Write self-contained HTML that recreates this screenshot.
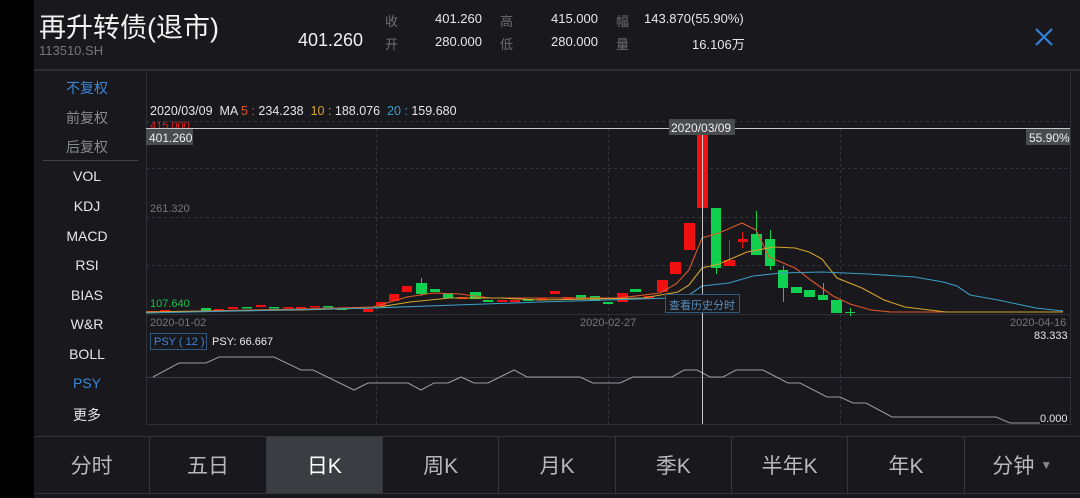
<!DOCTYPE html>
<html><head><meta charset="utf-8"><style>
*{margin:0;padding:0;box-sizing:border-box}
body{width:1080px;height:498px;background:#000;overflow:hidden;font-family:"Liberation Sans","Noto Sans CJK SC",sans-serif;position:relative}
#app{position:absolute;left:34px;top:0;width:1046px;height:498px;background:#18181d}
.a{position:absolute;white-space:nowrap}
.side{position:absolute;left:34px;width:106px;text-align:center;font-size:14px;color:#e8e8e8}
.tabs{position:absolute;left:34px;top:436px;width:1046px;height:58px;border-top:1px solid #333;border-bottom:1px solid #333;display:flex}
.tabs div{flex:1;border-right:1px solid #34363b;color:#b8b9bc;font-size:21px;display:flex;align-items:center;justify-content:center}
.tabs .on{background:#3a3d42;color:#fff}
</style></head><body>
<div id="app"></div>
<div class="a" style="left:39px;top:6px;font-size:27px;color:#f2f2f2">再升转债(退市)</div>
<div class="a" style="left:39px;top:43px;font-size:13px;color:#76777b">113510.SH</div>
<div class="a" style="left:298px;top:30px;font-size:18px;color:#f0f0f0">401.260</div>
<div class="a" style="left:385px;top:11px;font-size:13px;color:#6e6f73">收</div>
<div class="a" style="left:385px;top:34px;font-size:13px;color:#6e6f73">开</div>
<div class="a" style="left:435px;top:11px;font-size:13px;color:#e8e8e8">401.260</div>
<div class="a" style="left:435px;top:34px;font-size:13px;color:#e8e8e8">280.000</div>
<div class="a" style="left:500px;top:11px;font-size:13px;color:#6e6f73">高</div>
<div class="a" style="left:500px;top:34px;font-size:13px;color:#6e6f73">低</div>
<div class="a" style="left:551px;top:11px;font-size:13px;color:#e8e8e8">415.000</div>
<div class="a" style="left:551px;top:34px;font-size:13px;color:#e8e8e8">280.000</div>
<div class="a" style="left:616px;top:11px;font-size:13px;color:#6e6f73">幅</div>
<div class="a" style="left:616px;top:34px;font-size:13px;color:#6e6f73">量</div>
<div class="a" style="left:644px;top:11px;font-size:13px;color:#e8e8e8">143.870(55.90%)</div>
<div class="a" style="left:692px;top:34px;font-size:13px;color:#e8e8e8">16.106万</div>
<svg class="a" style="left:1034px;top:27px" width="20" height="20"><path d="M2 2L18 18M18 2L2 18" stroke="#2f86de" stroke-width="2"/></svg>
<div class="a" style="left:34px;top:69px;width:1046px;height:2px;background:#2c2d31"></div>

<div class="side" style="top:78px;color:#3d86d8">不复权</div>
<div class="side" style="top:108px;color:#8a8b8f">前复权</div>
<div class="side" style="top:137px;color:#8a8b8f">后复权</div>
<div class="a" style="left:43px;top:160px;width:95px;height:1px;background:#444"></div>
<div class="side" style="top:168px">VOL</div>
<div class="side" style="top:198px">KDJ</div>
<div class="side" style="top:228px">MACD</div>
<div class="side" style="top:257px">RSI</div>
<div class="side" style="top:287px">BIAS</div>
<div class="side" style="top:316px">W&amp;R</div>
<div class="side" style="top:346px">BOLL</div>
<div class="side" style="top:375px;color:#3d86d8">PSY</div>
<div class="side" style="top:405px">更多</div>

<div class="a" style="left:150px;top:120px;font-size:11px;color:#e02020">415.000</div>
<svg class="a" style="left:0;top:0" width="1080" height="498">
<g fill="none" stroke="#2e3035" stroke-width="1">
<path d="M146.5 72V425M1070.5 72V425M146 314.5H1070M146 424.5H1070"/>
</g>
<g fill="none" stroke="#34363b" stroke-dasharray="3,3">
<path d="M146 121.5H1070M146 168.5H1070M146 217.5H1070M146 265.5H1070M376.5 128V425M608.5 128V425M840.5 128V425"/>
</g>
<path d="M146 377.5H1070" stroke="#3b3d42"/>
<g fill="#f01010">
<rect x="147" y="311" width="10" height="2"/><rect x="160" y="310" width="10" height="2"/><rect x="214" y="309" width="10" height="2"/><rect x="228" y="307" width="10" height="2"/><rect x="256" y="305" width="10" height="2"/><rect x="283" y="307" width="10" height="1.5"/><rect x="296" y="307" width="10" height="1.5"/><rect x="310" y="306" width="10" height="1.5"/><rect x="363" y="309" width="10" height="3"/><rect x="376" y="302" width="10" height="4"/><rect x="389" y="294" width="10" height="7"/><rect x="402" y="286" width="10" height="6"/><rect x="457" y="297" width="10" height="2"/><rect x="497" y="300" width="10" height="2"/><rect x="510" y="300" width="10" height="2"/><rect x="537" y="298" width="10" height="2"/><rect x="550" y="291" width="10" height="3"/>
<rect x="563" y="297" width="10" height="3"/><rect x="617" y="293" width="11" height="9"/><rect x="644" y="296" width="10" height="3"/><rect x="657" y="280" width="11" height="12"/><rect x="670" y="262" width="11" height="12"/><rect x="684" y="223" width="11" height="27"/><rect x="697" y="132" width="11" height="76"/><rect x="724" y="260" width="11" height="6"/><rect x="738" y="239" width="10" height="3"/>
<rect x="729" y="240" width="1" height="20"/><rect x="742" y="232" width="1" height="16"/>
</g>
<g fill="#10d050">
<rect x="201" y="308" width="10" height="3"/><rect x="242" y="307" width="10" height="1.5"/><rect x="269" y="307" width="10" height="1.5"/><rect x="323" y="306" width="10" height="1.5"/><rect x="337" y="308" width="10" height="2"/><rect x="416" y="283" width="11" height="11"/><rect x="430" y="289" width="10" height="3"/><rect x="443" y="293" width="10" height="5"/><rect x="470" y="292" width="11" height="7"/><rect x="483" y="300" width="10" height="2"/><rect x="523" y="299" width="10" height="2"/>
<rect x="576" y="295" width="10" height="4"/><rect x="590" y="296" width="10" height="5"/><rect x="603" y="302" width="10" height="2"/><rect x="630" y="289" width="11" height="3"/><rect x="711" y="208" width="10" height="60"/><rect x="751" y="234" width="11" height="21"/><rect x="765" y="239" width="10" height="27"/><rect x="778" y="270" width="10" height="18"/><rect x="791" y="287" width="11" height="6"/><rect x="804" y="290" width="11" height="7"/><rect x="818" y="295" width="10" height="5"/><rect x="831" y="300" width="11" height="13"/><rect x="845" y="312" width="10" height="1"/>
<rect x="756" y="211" width="1" height="44"/><rect x="770" y="230" width="1" height="40"/><rect x="783" y="266" width="1" height="36"/><rect x="716" y="266" width="1" height="8"/><rect x="823" y="283" width="1" height="12"/><rect x="850" y="308" width="1" height="8"/><rect x="421" y="278" width="1" height="18"/>
</g>
<g fill="none" stroke-width="1.1">
<polyline stroke="#e0582a" points="146,312 300,309 373,307 407,297 433,293 460,294 490,298 540,298 619,298 660,293 676,284 689,270 702,238 719,233 742,223 756,230 769,257 795,268 812,281 833,296 850,304 871,310 891,312 1063,312"/>
<polyline stroke="#d4a52c" points="146,312 300,310 373,308 410,302 450,298 500,298 540,300 643,298 678,292 689,285 702,268 719,264 747,252 774,247 795,248 809,252 822,259 837,278 862,288 884,300 905,307 946,312 1063,312"/>
<polyline stroke="#3a9ec6" points="146,313 373,308 540,302 671,298 689,295 702,286 729,283 753,276 781,273 822,272 867,274 915,277 943,282 957,286 970,295 998,300 1036,308 1063,311"/>
<polyline stroke="#9a9b9e" points="153,377 179,363 206,363 219,357 274,357 301,370 313,370 354,390 368,383 408,383 421,390 434,383 448,383 461,377 474,383 488,383 514,370 527,377 580,377 593,383 620,383 633,377 672,377 684,370 697,370 710,377 723,377 736,370 763,370 788,383 800,383 827,397 840,397 853,403 866,403 892,417 996,417 1010,423 1040,423"/>
</g>
<path d="M702.5 128V424M146 128.5H1070" stroke="#c8c8c8"/>
<rect x="669" y="119" width="66" height="16" fill="#4a4b4f"/>
<rect x="146" y="129" width="47" height="16" fill="#4a4b4f"/>
<rect x="1026" y="129" width="44" height="16" fill="#4a4b4f"/>
<rect x="665.5" y="294.5" width="74" height="18" fill="#18181d" stroke="#2d5a80"/>
<rect x="150.5" y="333.5" width="56" height="16" fill="none" stroke="#2d5a80"/>
</svg>
<div class="a" style="left:150px;top:104px;font-size:12.5px;color:#e6e6e6">2020/03/09 &nbsp;MA <span style="color:#e0582a">5 : </span>234.238 <span style="color:#d4a52c">&nbsp;10 : </span>188.076 <span style="color:#3a9ec6">&nbsp;20 : </span>159.680</div>
<div class="a" style="left:671px;top:121px;font-size:12px;color:#eee">2020/03/09</div>
<div class="a" style="left:149px;top:131px;font-size:12px;color:#eee">401.260</div>
<div class="a" style="left:1029px;top:131px;font-size:12px;color:#eee">55.90%</div>
<div class="a" style="left:150px;top:203px;font-size:11px;color:#77787c">261.320</div>
<div class="a" style="left:150px;top:298px;font-size:11px;color:#19c24a">107.640</div>
<div class="a" style="left:669px;top:297px;font-size:11px;color:#5a8fbf">查看历史分时</div>
<div class="a" style="left:150px;top:317px;font-size:11px;color:#77787c">2020-01-02</div>
<div class="a" style="left:580px;top:317px;font-size:11px;color:#77787c">2020-02-27</div>
<div class="a" style="left:1010px;top:317px;font-size:11px;color:#77787c">2020-04-16</div>
<div class="a" style="left:1034px;top:330px;font-size:11px;color:#e6e6e6">83.333</div>
<div class="a" style="left:154px;top:336px;font-size:11px;color:#3d86d8">PSY ( 12 )</div>
<div class="a" style="left:212px;top:336px;font-size:11px;color:#eee">PSY: 66.667</div>
<div class="a" style="left:1040px;top:413px;font-size:11px;color:#e6e6e6">0.000</div>

<div class="tabs">
<div>分时</div><div>五日</div><div class="on">日K</div><div>周K</div><div>月K</div><div>季K</div><div>半年K</div><div>年K</div><div style="border-right:none">分钟 <span style="font-size:12px;margin-left:6px;color:#888">▼</span></div>
</div>
</body></html>
